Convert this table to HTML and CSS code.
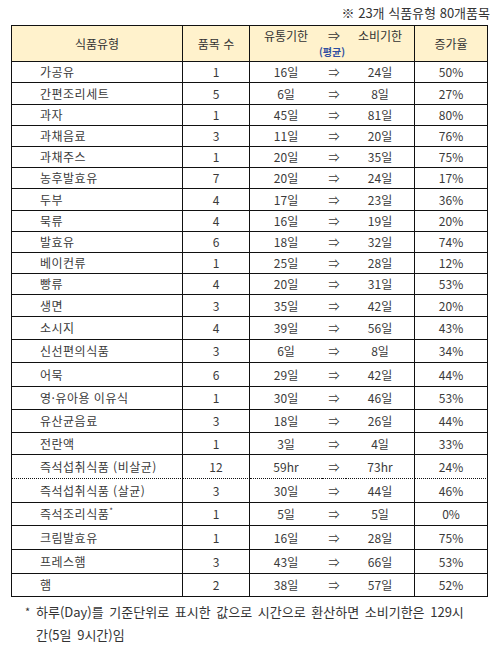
FILE: index.html
```html
<!DOCTYPE html>
<html lang="ko">
<head>
<meta charset="utf-8">
<link rel="stylesheet" href="styles.css">
</head>
<body>
<div class="page">
  <div class="note">※ 23개 식품유형 80개품목</div>
  <table class="tbl">
    <colgroup>
      <col class="c-name"><col class="c-cnt"><col class="c-a"><col class="c-arr"><col class="c-b"><col class="c-pct">
    </colgroup>
    <thead>
      <tr class="h1">
        <th rowspan="2" class="bl">식품유형</th>
        <th rowspan="2">품목 수</th>
        <th class="sub nb-r">유통기한</th>
        <th class="sub nb-r">⇒</th>
        <th class="sub">소비기한</th>
        <th rowspan="2">증가율</th>
      </tr>
      <tr class="h2">
        <th colspan="3" class="avg">(평균)</th>
      </tr>
    </thead>
    <tbody>
      <tr><td class="name">가공유</td><td>1</td><td class="nb-r">16일</td><td class="nb-r arr">⇒</td><td>24일</td><td>50%</td></tr>
      <tr class="t"><td class="name">간편조리세트</td><td>5</td><td class="nb-r">6일</td><td class="nb-r arr">⇒</td><td>8일</td><td>27%</td></tr>
      <tr><td class="name">과자</td><td>1</td><td class="nb-r">45일</td><td class="nb-r arr">⇒</td><td>81일</td><td>80%</td></tr>
      <tr><td class="name">과채음료</td><td>3</td><td class="nb-r">11일</td><td class="nb-r arr">⇒</td><td>20일</td><td>76%</td></tr>
      <tr><td class="name">과채주스</td><td>1</td><td class="nb-r">20일</td><td class="nb-r arr">⇒</td><td>35일</td><td>75%</td></tr>
      <tr><td class="name">농후발효유</td><td>7</td><td class="nb-r">20일</td><td class="nb-r arr">⇒</td><td>24일</td><td>17%</td></tr>
      <tr class="t"><td class="name">두부</td><td>4</td><td class="nb-r">17일</td><td class="nb-r arr">⇒</td><td>23일</td><td>36%</td></tr>
      <tr><td class="name">묵류</td><td>4</td><td class="nb-r">16일</td><td class="nb-r arr">⇒</td><td>19일</td><td>20%</td></tr>
      <tr><td class="name">발효유</td><td>6</td><td class="nb-r">18일</td><td class="nb-r arr">⇒</td><td>32일</td><td>74%</td></tr>
      <tr><td class="name">베이컨류</td><td>1</td><td class="nb-r">25일</td><td class="nb-r arr">⇒</td><td>28일</td><td>12%</td></tr>
      <tr><td class="name">빵류</td><td>4</td><td class="nb-r">20일</td><td class="nb-r arr">⇒</td><td>31일</td><td>53%</td></tr>
      <tr class="t"><td class="name">생면</td><td>3</td><td class="nb-r">35일</td><td class="nb-r arr">⇒</td><td>42일</td><td>20%</td></tr>
      <tr class="u"><td class="name">소시지</td><td>4</td><td class="nb-r">39일</td><td class="nb-r arr">⇒</td><td>56일</td><td>43%</td></tr>
      <tr class="u"><td class="name">신선편의식품</td><td>3</td><td class="nb-r">6일</td><td class="nb-r arr">⇒</td><td>8일</td><td>34%</td></tr>
      <tr class="v"><td class="name">어묵</td><td>6</td><td class="nb-r">29일</td><td class="nb-r arr">⇒</td><td>42일</td><td>44%</td></tr>
      <tr class="u"><td class="name">영·유아용 이유식</td><td>1</td><td class="nb-r">30일</td><td class="nb-r arr">⇒</td><td>46일</td><td>53%</td></tr>
      <tr class="u"><td class="name">유산균음료</td><td>3</td><td class="nb-r">18일</td><td class="nb-r arr">⇒</td><td>26일</td><td>44%</td></tr>
      <tr class="t"><td class="name">전란액</td><td>1</td><td class="nb-r">3일</td><td class="nb-r arr">⇒</td><td>4일</td><td>33%</td></tr>
      <tr class="v dotted"><td class="name">즉석섭취식품 (비살균)</td><td>12</td><td class="nb-r">59hr</td><td class="nb-r arr">⇒</td><td>73hr</td><td>24%</td></tr>
      <tr class="v"><td class="name">즉석섭취식품 (살균)</td><td>3</td><td class="nb-r">30일</td><td class="nb-r arr">⇒</td><td>44일</td><td>46%</td></tr>
      <tr class="u"><td class="name">즉석조리식품<sup>*</sup></td><td>1</td><td class="nb-r">5일</td><td class="nb-r arr">⇒</td><td>5일</td><td>0%</td></tr>
      <tr class="v"><td class="name">크림발효유</td><td>1</td><td class="nb-r">16일</td><td class="nb-r arr">⇒</td><td>28일</td><td>75%</td></tr>
      <tr class="v"><td class="name">프레스햄</td><td>3</td><td class="nb-r">43일</td><td class="nb-r arr">⇒</td><td>66일</td><td>53%</td></tr>
      <tr class="u"><td class="name">햄</td><td>2</td><td class="nb-r">38일</td><td class="nb-r arr">⇒</td><td>57일</td><td>52%</td></tr>
    </tbody>
  </table>
  <div class="foot">
    <span class="star">*</span>
    <p class="foot-text">하루(Day)를 기준단위로 표시한 값으로 시간으로 환산하면 소비기한은 129시<br>간(5일 9시간)임</p>
  </div>
</div>
</body>
</html>
```

FILE: styles.css
```css
html, body {
  margin: 0;
  padding: 0;
  background: #fff;
}
.page {
  width: 500px;
  font-family: "Noto Sans CJK KR", "Noto Sans", sans-serif;
  color: #3a3a3a;
}
.note {
  text-align: right;
  font-size: 13px;
  line-height: 16px;
  padding: 5px 10px 0 0;
  height: 20px;
  color: #333;
}
.tbl {
  margin-left: 11px;
  width: 477px;
  table-layout: fixed;
  border-collapse: separate;
  border-spacing: 0;
  border-top: 1px solid #111;
  font-size: 12px;
}
.c-name { width: 172px; }
.c-cnt { width: 67px; }
.c-a { width: 72px; }
.c-arr { width: 24px; }
.c-b { width: 69px; }
.c-pct { width: 73px; }
.tbl th, .tbl td {
  border-right: 1px solid #111;
  border-bottom: 1px solid #111;
  padding: 0;
  text-align: center;
  vertical-align: middle;
  font-weight: normal;
  line-height: 14px;
  white-space: nowrap;
}
.tbl th:first-child, .tbl td:first-child {
  border-left: 1px solid #111;
}
.tbl thead th {
  background: #fff2cc;
  color: #333;
}
.tbl .h1 { height: 20px; }
.tbl .h2 { height: 16px; }
.tbl .h1 .sub {
  border-bottom: none;
  vertical-align: top;
  padding-top: 3px;
}
.tbl .h1 th.sub:first-child { border-left: none; }
.tbl .h2 th.avg {
  border-left: none;
  font-size: 10px;
  font-weight: bold;
  color: #2e4ea0;
  line-height: 12px;
  vertical-align: top;
}
.tbl th.nb-r, .tbl td.nb-r { border-right: none; }
.tbl tbody tr { height: 21px; }
.tbl tbody tr.t { height: 22px; }
.tbl tbody tr.u { height: 23px; }
.tbl tbody tr.v { height: 24px; }
.tbl td.name {
  text-align: left;
  padding-left: 28px;
  letter-spacing: 0.5px;
}
.tbl td.arr { font-size: 11px; }
.tbl tr.dotted td { border-bottom: 1px dotted #111; }
.tbl sup {
  font-size: 8px;
  line-height: 0;
  vertical-align: 5px;
}
.foot {
  display: flex;
  align-items: flex-start;
  padding: 3px 0 0 25px;
  font-size: 13px;
  line-height: 23px;
  color: #333;
}
.star {
  width: 11px;
  font-size: 11px;
}
.foot-text {
  margin: 0;
  white-space: nowrap;
  word-spacing: 2px;
}
```
